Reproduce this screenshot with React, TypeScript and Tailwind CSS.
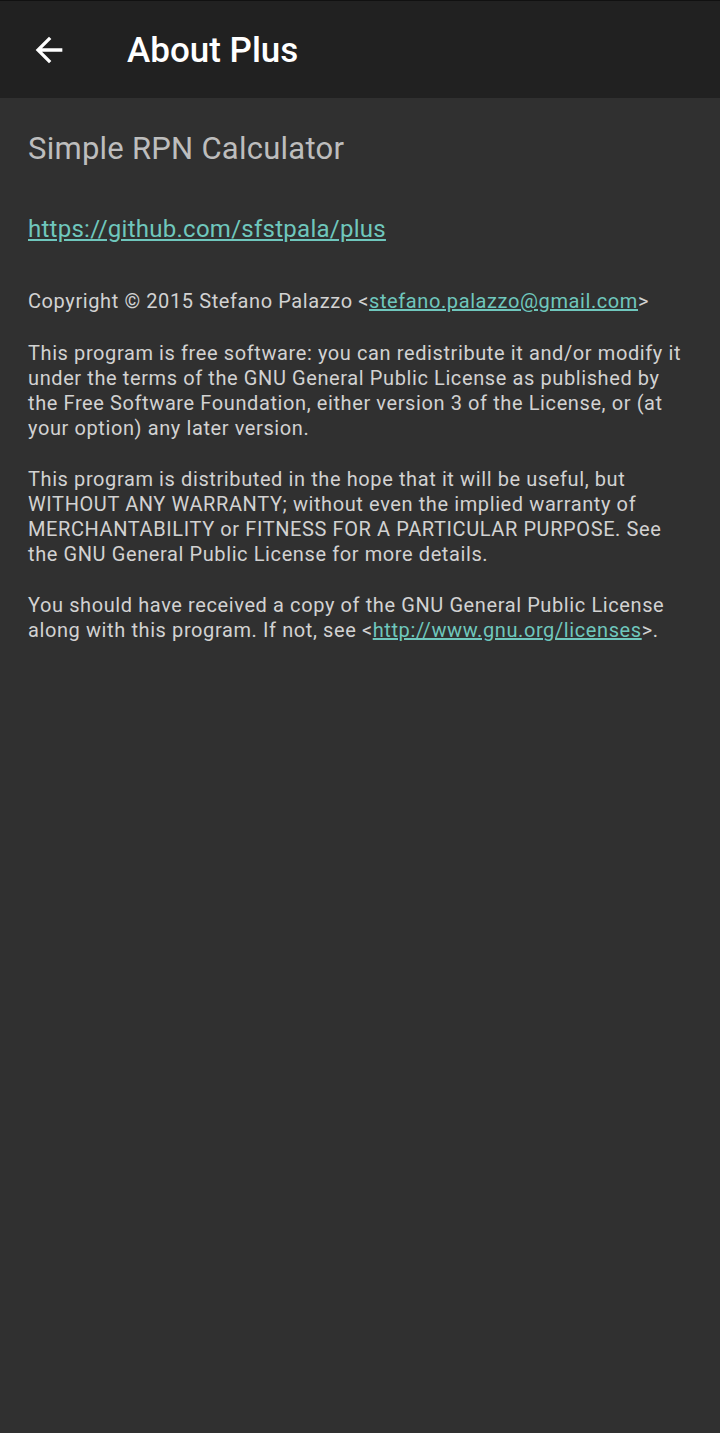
export default function App() {
  return (
    <main className="min-h-[1433px] w-[720px] bg-[#303030] font-['Roboto',sans-serif]">
      {/* Toolbar */}
      <header className="flex h-[98px] items-center border-t border-[#111] bg-[#212121]">
        <button className="ml-[29px] flex h-[40px] w-[40px] items-center justify-center">
          <svg viewBox="0 0 24 24" className="h-[40px] w-[40px] fill-white">
            <path d="M20 11H7.83l5.59-5.59L12 4l-8 8 8 8 1.41-1.41L7.83 13H20v-2z" />
          </svg>
        </button>
        <h1 className="ml-[58px] mt-[4px] text-[35px] font-medium text-white">About Plus</h1>
      </header>

      {/* Content */}
      <div className="px-[28px] pt-[31px]">
        <h2 className="text-[31px] leading-[40px] tracking-[0.25px] text-[#bdbdbd]">Simple RPN Calculator</h2>
        <p className="mt-[45px] text-[24px] leading-[30px] tracking-[0.26px]">
          <a className="text-[#6fc7bd] underline" href="#">https://github.com/sfstpala/plus</a>
        </p>

        <div className="mt-[45px] text-[20px] leading-[25px] tracking-[0.6px] text-[#d2d2d2]">
          <p>
            Copyright © 2015 Stefano Palazzo &lt;
            <a className="text-[#6fc7bd] underline" href="#">stefano.palazzo@gmail.com</a>&gt;
          </p>
          <p className="mt-[27px]">
            This program is free software: you can redistribute it and/or modify it under the terms of the GNU
            General Public License as published by the Free Software Foundation, either version 3 of the License, or
            (at your option) any later version.
          </p>
          <p className="mt-[26px]">
            This program is distributed in the hope that it will be useful, but WITHOUT ANY WARRANTY; without even the
            implied warranty of MERCHANTABILITY or FITNESS FOR A PARTICULAR PURPOSE. See the GNU General Public License
            for more details.
          </p>
          <p className="mt-[26px]">
            You should have received a copy of the GNU General Public License along with this program. If not, see
            &lt;<a className="text-[#6fc7bd] underline" href="#">http://www.gnu.org/licenses</a>&gt;.
          </p>
        </div>
      </div>
    </main>
  );
}
